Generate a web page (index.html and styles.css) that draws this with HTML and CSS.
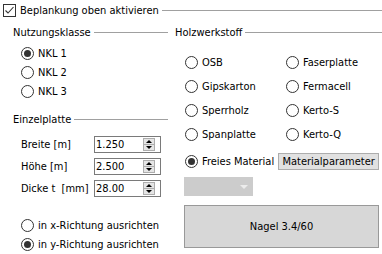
FILE: index.html
```html
<!DOCTYPE html>
<html lang="de">
<head>
  <meta charset="UTF-8">
  <title>Beplankung</title>
  <link rel="stylesheet" href="styles.css">
</head>
<body>
  <div class="head">
    <label class="check">
      <span class="box"><svg width="11" height="11" viewBox="0 0 11 11"><polyline points="1.5,5.5 4,8 9.5,2" fill="none" stroke="#333" stroke-width="1.1"/></svg></span>
      Beplankung oben aktivieren
    </label>
    <span class="rule"></span>
  </div>

  <div class="cols">
    <div class="col left">
      <div class="group-title"><span>Nutzungsklasse</span><span class="rule"></span></div>
      <div class="radios nkl">
        <div class="radio on"><span class="dot"></span>NKL 1</div>
        <div class="radio"><span class="dot"></span>NKL 2</div>
        <div class="radio"><span class="dot"></span>NKL 3</div>
      </div>

      <div class="group-title plate"><span>Einzelplatte</span><span class="rule"></span></div>
      <div class="fields">
        <div class="field">
          <span class="lbl">Breite [m]</span>
          <div class="spin"><span class="val">1.250</span><span class="btns"><span class="up"></span><span class="down"></span></span></div>
        </div>
        <div class="field">
          <span class="lbl">Höhe [m]</span>
          <div class="spin"><span class="val">2.500</span><span class="btns"><span class="up"></span><span class="down"></span></span></div>
        </div>
        <div class="field">
          <span class="lbl">Dicke t&nbsp; [mm]</span>
          <div class="spin"><span class="val">28.00</span><span class="btns"><span class="up"></span><span class="down"></span></span></div>
        </div>
      </div>

      <div class="radios orient">
        <div class="radio"><span class="dot"></span>in x-Richtung ausrichten</div>
        <div class="radio on"><span class="dot"></span>in y-Richtung ausrichten</div>
      </div>
    </div>

    <div class="col right">
      <div class="group-title"><span>Holzwerkstoff</span><span class="rule"></span></div>
      <div class="material-grid">
        <div class="radio"><span class="dot"></span>OSB</div>
        <div class="radio"><span class="dot"></span>Faserplatte</div>
        <div class="radio"><span class="dot"></span>Gipskarton</div>
        <div class="radio"><span class="dot"></span>Fermacell</div>
        <div class="radio"><span class="dot"></span>Sperrholz</div>
        <div class="radio"><span class="dot"></span>Kerto-S</div>
        <div class="radio"><span class="dot"></span>Spanplatte</div>
        <div class="radio"><span class="dot"></span>Kerto-Q</div>
      </div>
      <div class="free-row">
        <div class="radio on"><span class="dot"></span>Freies Material</div>
        <button class="btn small">Materialparameter</button>
      </div>
      <div class="combo"><span class="arrow"></span></div>
      <button class="btn big">Nagel 3.4/60</button>
    </div>
  </div>
</body>
</html>
```

FILE: styles.css
```css
body {
  margin: 0;
  background: #fff;
  font-family: "DejaVu Sans Condensed", "DejaVu Sans", sans-serif;
  font-stretch: condensed;
  font-size: 11px;
  color: #000;
  width: 382px;
}

.rule {
  flex: 1;
  height: 1px;
  background: #a0a0a0;
}

/* header checkbox */
.head {
  display: flex;
  align-items: center;
  height: 19px;
  margin-top: 1px;
}
.check {
  display: flex;
  align-items: center;
  gap: 4px;
  padding-left: 3px;
  margin-right: 3px;
}
.box {
  box-sizing: border-box;
  width: 13px;
  height: 13px;
  border: 1px solid #333;
  display: flex;
  align-items: center;
  justify-content: center;
}
.box svg { display: block; }

.cols {
  display: flex;
}
.col.left {
  box-sizing: border-box;
  width: 172px;
  padding: 0 4px 0 13px;
}
.col.right {
  flex: 1;
  padding-left: 3px;
}

.group-title {
  display: flex;
  align-items: center;
  gap: 3px;
  height: 14px;
  margin-top: 5px;
}
.group-title.plate { margin-top: 11px; }

/* radios */
.radio {
  display: flex;
  align-items: center;
  gap: 4px;
  height: 19px;
  white-space: nowrap;
}
.dot {
  box-sizing: border-box;
  width: 13px;
  height: 13px;
  border: 1px solid #333;
  border-radius: 50%;
  display: flex;
  align-items: center;
  justify-content: center;
}
.radio.on .dot::after {
  content: "";
  width: 7px;
  height: 7px;
  border-radius: 50%;
  background: #333;
}

.radios.nkl {
  margin-top: 5px;
  padding-left: 8px;
}
.radios.orient {
  margin-top: 17px;
  padding-left: 8px;
}

/* spin fields */
.fields {
  margin-top: 7px;
  padding-left: 8px;
}
.field {
  display: flex;
  align-items: center;
  height: 22px;
}
.lbl {
  width: 73px;
}
.spin {
  box-sizing: border-box;
  width: 67px;
  height: 17px;
  border: 1px solid #7a7a7a;
  display: flex;
  align-items: center;
  padding-left: 1px;
}
.val {
  flex: 1;
}
.btns {
  box-sizing: border-box;
  width: 12px;
  height: 13px;
  margin-right: 5px;
  border: 1px solid #adadad;
  background: #e5e5e5;
  display: flex;
  flex-direction: column;
}
.btns span {
  flex: 1;
  display: flex;
  align-items: center;
  justify-content: center;
}
.btns .up { border-bottom: 1px solid #adadad; }
.btns .up::after {
  content: "";
  border-left: 3px solid transparent;
  border-right: 3px solid transparent;
  border-bottom: 3px solid #000;
}
.btns .down::after {
  content: "";
  border-left: 3px solid transparent;
  border-right: 3px solid transparent;
  border-top: 3px solid #000;
}

/* material column */
.material-grid {
  display: grid;
  grid-template-columns: 101px auto;
  grid-auto-rows: 24px;
  margin-top: 11px;
  padding-left: 10px;
}
.material-grid .radio { height: 24px; }

.free-row {
  display: flex;
  align-items: center;
  gap: 4px;
  height: 24px;
  margin-top: 3px;
  padding-left: 10px;
}
.btn {
  font: inherit;
  color: #000;
  background: #e1e1e1;
  border: 1px solid #adadad;
  padding: 0;
  margin: 0;
}
.btn.small {
  width: 101px;
  height: 17px;
}
.combo {
  box-sizing: border-box;
  width: 69px;
  height: 19px;
  margin: 4px 0 0 9px;
  background: #cccccc;
  display: flex;
  align-items: center;
  justify-content: flex-end;
  padding-right: 5px;
}
.arrow {
  border-left: 4px solid transparent;
  border-right: 4px solid transparent;
  border-top: 4px solid #ececec;
}
.btn.big {
  display: block;
  width: 195px;
  height: 43px;
  margin: 9px 0 0 9px;
  background: #d7d7d7;
  border-color: #999;
}
```
